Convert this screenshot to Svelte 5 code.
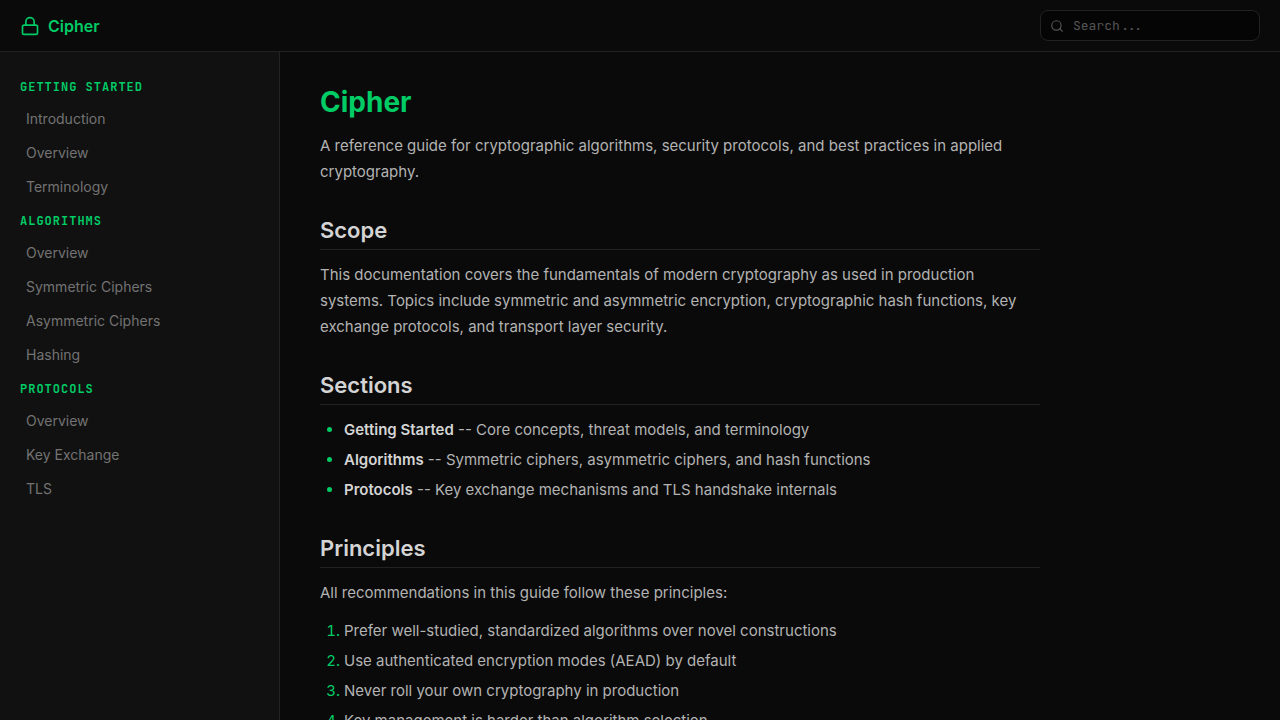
<script lang="ts">
	interface NavGroup {
		title: string;
		links: string[];
	}

	const nav: NavGroup[] = [
		{ title: 'Getting Started', links: ['Introduction', 'Overview', 'Terminology'] },
		{
			title: 'Algorithms',
			links: ['Overview', 'Symmetric Ciphers', 'Asymmetric Ciphers', 'Hashing']
		},
		{ title: 'Protocols', links: ['Overview', 'Key Exchange', 'TLS'] }
	];

	const sections = [
		{ name: 'Getting Started', text: 'Core concepts, threat models, and terminology' },
		{ name: 'Algorithms', text: 'Symmetric ciphers, asymmetric ciphers, and hash functions' },
		{ name: 'Protocols', text: 'Key exchange mechanisms and TLS handshake internals' }
	];

	const principles = [
		'Prefer well-studied, standardized algorithms over novel constructions',
		'Use authenticated encryption modes (AEAD) by default',
		'Never roll your own cryptography in production',
		'Key management is harder than algorithm selection'
	];

	let query = $state('');

	const slug = (...parts: string[]) => '#' + parts.join('-').toLowerCase().replaceAll(' ', '-');
</script>

<div class="page">
	<header>
		<a class="brand" href="#top">
			<svg viewBox="0 0 24 24" width="20" height="20" aria-hidden="true">
				<rect x="3" y="11" width="18" height="11" rx="2" />
				<path d="M7 11V7a5 5 0 0 1 10 0v4" />
			</svg>
			Cipher
		</a>
		<label class="search">
			<svg viewBox="0 0 24 24" width="14" height="14" aria-hidden="true">
				<circle cx="11" cy="11" r="8" />
				<path d="M21 21l-4.35-4.35" />
			</svg>
			<input type="search" placeholder="Search..." aria-label="Search" bind:value={query} />
		</label>
	</header>

	<div class="body">
		<nav>
			{#each nav as group}
				<h2>{group.title}</h2>
				<ul>
					{#each group.links as link}
						<li><a href={slug(group.title, link)}>{link}</a></li>
					{/each}
				</ul>
			{/each}
		</nav>

		<main id="top">
			<article>
				<h1>Cipher</h1>
				<p>
					A reference guide for cryptographic algorithms, security protocols, and best practices in
					applied cryptography.
				</p>

				<h2>Scope</h2>
				<p>
					This documentation covers the fundamentals of modern cryptography as used in production
					systems. Topics include symmetric and asymmetric encryption, cryptographic hash functions,
					key exchange protocols, and transport layer security.
				</p>

				<h2>Sections</h2>
				<ul>
					{#each sections as section}
						<li><strong>{section.name}</strong> -- {section.text}</li>
					{/each}
				</ul>

				<h2>Principles</h2>
				<p>All recommendations in this guide follow these principles:</p>
				<ol>
					{#each principles as principle}
						<li>{principle}</li>
					{/each}
				</ol>
			</article>
		</main>
	</div>
</div>

<style>
	:global(body) {
		background: #0a0a0a;
	}

	.page {
		--accent: #00cc66;
		--line: #222;
		--mono: 'JetBrains Mono', 'Fira Code', 'DejaVu Sans Mono', monospace;
		display: flex;
		flex-direction: column;
		height: 100vh;
		background: #0a0a0a;
		color: #b3b3b3;
		font-family: Inter, sans-serif;
		font-size: 15px;
		line-height: 26px;
	}

	svg {
		fill: none;
		stroke: currentColor;
		stroke-width: 2;
		stroke-linecap: round;
		stroke-linejoin: round;
	}

	header {
		display: flex;
		align-items: center;
		justify-content: space-between;
		padding: 10px 20px;
		border-bottom: 1px solid var(--line);
	}

	.brand {
		display: flex;
		align-items: center;
		gap: 8px;
		color: var(--accent);
		font-size: 16px;
		font-weight: 600;
		text-decoration: none;
	}

	.search {
		display: flex;
		align-items: center;
		gap: 9px;
		box-sizing: border-box;
		width: 220px;
		padding: 0 9px;
		border: 1px solid var(--line);
		border-radius: 8px;
		background: #050505;
		color: #555;
	}

	.search input {
		flex: 1;
		min-width: 0;
		height: 29px;
		padding: 0;
		border: 0;
		outline: 0;
		background: none;
		color: #ccc;
		font-family: var(--mono);
		font-size: 13px;
	}

	.search input::placeholder {
		color: #555;
	}

	.search:focus-within {
		border-color: var(--accent);
	}

	.body {
		display: flex;
		flex: 1;
		min-height: 0;
	}

	nav {
		flex: 0 0 280px;
		box-sizing: border-box;
		padding: 18px 20px;
		overflow-y: auto;
		border-right: 1px solid var(--line);
		background: #111;
	}

	nav h2 {
		margin: 0;
		padding: 8px 0 6px;
		color: var(--accent);
		font-family: var(--mono);
		font-size: 12px;
		font-weight: 700;
		line-height: 18px;
		letter-spacing: 1px;
		text-transform: uppercase;
	}

	nav ul {
		margin: 0;
		padding: 0;
		list-style: none;
	}

	nav a {
		display: block;
		padding: 6px;
		color: #737373;
		font-size: 14px;
		line-height: 22px;
		text-decoration: none;
	}

	nav a:hover {
		color: #ccc;
	}

	main {
		flex: 1;
		min-width: 0;
		padding: 32px 40px;
		overflow-y: auto;
		scrollbar-width: none;
	}

	article {
		max-width: 720px;
	}

	h1 {
		margin: 0 0 13px;
		color: var(--accent);
		font-size: 28px;
		font-weight: 700;
		line-height: 36px;
	}

	article h2 {
		margin: 30px 0 12px;
		padding-bottom: 4px;
		border-bottom: 1px solid var(--line);
		color: #d4d4d4;
		font-size: 22px;
		font-weight: 600;
		line-height: 30px;
	}

	p {
		margin: 0 0 12px;
	}

	article ul,
	article ol {
		margin: 0;
		padding-left: 24px;
	}

	article li + li {
		margin-top: 4px;
	}

	article li::marker {
		color: var(--accent);
	}

	strong {
		color: #d4d4d4;
		font-weight: 600;
	}
</style>
